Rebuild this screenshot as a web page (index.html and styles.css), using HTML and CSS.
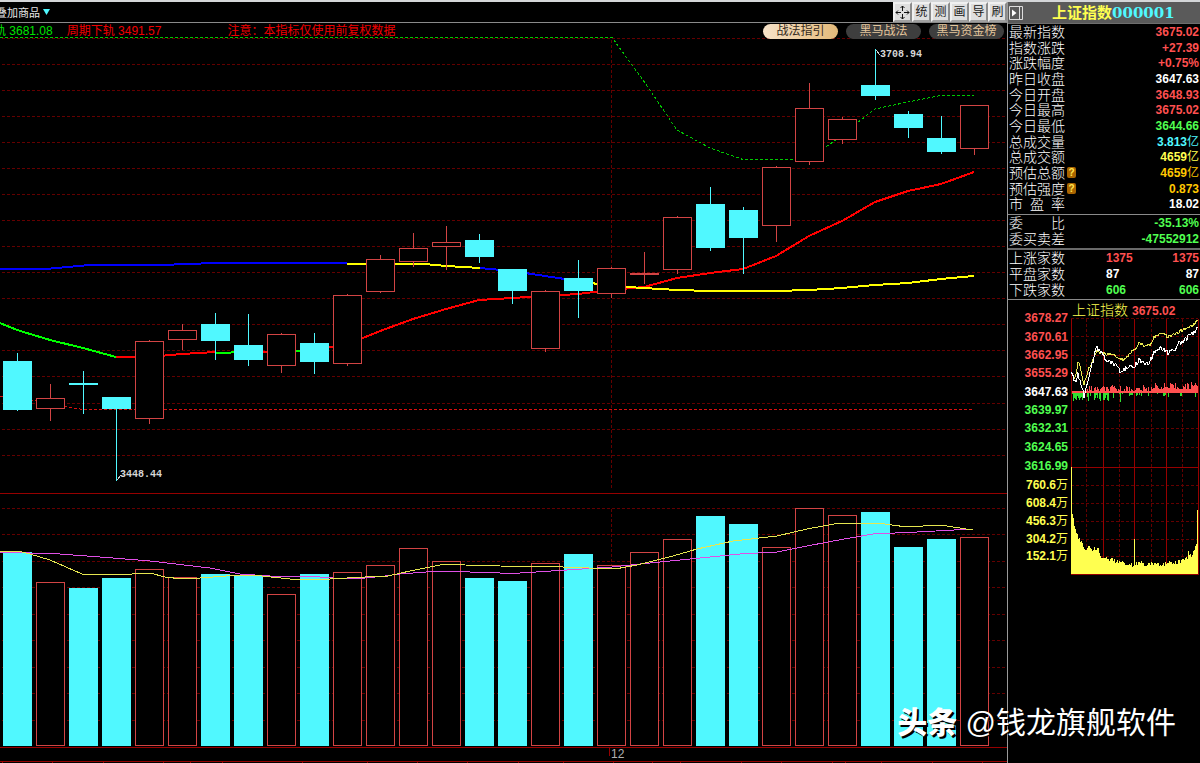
FILE: index.html
```html
<!DOCTYPE html>
<html lang="zh-CN">
<head>
<meta charset="utf-8">
<title>上证指数 000001</title>
<link rel="stylesheet" href="styles.css">
</head>
<body>
<div class="terminal">
  <main class="main">
    <header class="toolbar">
      <button class="overlay-menu" type="button">叠加商品<svg class="caret" viewBox="0 0 7 6"><path d="M0 0h7L3.500 6z"/></svg></button>
      <nav class="tools">
        <button class="tool" type="button" aria-label="移动"><svg class="move-icon" viewBox="0 0 15 15"><path d="M7.500 1v5M7.500 9v5M1 7.500h5M9 7.500h5M5.500 3l2-2 2 2M5.500 12l2 2 2-2M3 5.500l-2 2 2 2M12 5.500l2 2-2 2" /></svg></button>
        <button class="tool" type="button">统</button>
        <button class="tool" type="button">测</button>
        <button class="tool" type="button">画</button>
        <button class="tool" type="button">导</button>
        <button class="tool" type="button">刷</button>
      </nav>
    </header>
    <div class="legend">
      <span class="legend-upper">轨 3681.08</span>
      <span class="legend-lower">周期下轨 3491.57</span>
      <span class="legend-note">注意：本指标仅使用前复权数据</span>
      <div class="pills">
        <button class="pill pill-active" type="button">战法指引</button>
        <button class="pill" type="button">黑马战法</button>
        <button class="pill" type="button">黑马资金榜</button>
      </div>
    </div>
    <svg class="chart" id="chart" viewBox="0 37 1007 726" role="img" aria-label="日K线与成交量"></svg>
  </main>
  <aside class="side">
    <div class="side-title">
      <button class="expand" type="button" aria-label="展开"><svg viewBox="0 0 14 14"><path class="expand-frame" d="M.5.5h13v13H.5zM10.500 1v12"/><path class="expand-arrow" d="M3 3.500v7L7.500 7z"/></svg></button>
      <h1 class="index-name">上证指数<span class="index-code">000001</span></h1>
    </div>
    <dl class="quotes quotes-main">
      <div class="row"><dt>最新指数</dt><dd class="up">3675.02</dd></div>
      <div class="row"><dt>指数涨跌</dt><dd class="up">+27.39</dd></div>
      <div class="row"><dt>涨跌幅度</dt><dd class="up">+0.75%</dd></div>
      <div class="row"><dt>昨日收盘</dt><dd>3647.63</dd></div>
      <div class="row"><dt>今日开盘</dt><dd class="up">3648.93</dd></div>
      <div class="row"><dt>今日最高</dt><dd class="up">3675.02</dd></div>
      <div class="row"><dt>今日最低</dt><dd class="down">3644.66</dd></div>
      <div class="row"><dt>总成交量</dt><dd class="vol">3.813<i>亿</i></dd></div>
      <div class="row"><dt>总成交额</dt><dd class="amount">4659<i>亿</i></dd></div>
      <div class="row"><dt>预估总额<span class="help">?</span></dt><dd class="gold">4659<i>亿</i></dd></div>
      <div class="row"><dt>预估强度<span class="help">?</span></dt><dd class="gold">0.873</dd></div>
      <div class="row"><dt class="spread"><span>市</span><span>盈</span><span>率</span></dt><dd>18.02</dd></div>
    </dl>
    <dl class="quotes quotes-order">
      <div class="row"><dt class="spread"><span>委</span><span>比</span></dt><dd class="down">-35.13%</dd></div>
      <div class="row"><dt>委买卖差</dt><dd class="down">-47552912</dd></div>
    </dl>
    <dl class="quotes quotes-count">
      <div class="row"><dt>上涨家数</dt><dd class="mid up">1375</dd><dd class="up">1375</dd></div>
      <div class="row"><dt>平盘家数</dt><dd class="mid">87</dd><dd>87</dd></div>
      <div class="row"><dt>下跌家数</dt><dd class="mid down">606</dd><dd class="down">606</dd></div>
    </dl>
    <svg class="mini" id="mini" viewBox="1008 300 192 463" role="img" aria-label="分时走势"></svg>
  </aside>
  <p class="watermark"><b>头条</b> @钱龙旗舰软件</p>
</div>
<script src="script.js"></script>
</body>
</html>
```
FILE: styles.css
```css
* { box-sizing: border-box; }

body {
  margin: 0;
  background: #000;
  color: #fff;
  font-family: "Liberation Sans", "Noto Sans CJK SC", sans-serif;
  font-size: 12px;
}

button {
  margin: 0;
  padding: 0;
  border: 0;
  background: none;
  color: inherit;
  font: inherit;
  cursor: pointer;
}

svg { display: block; }

.terminal {
  position: relative;
  display: grid;
  grid-template-columns: minmax(0, 1fr) 193px;
  border-top: 2px solid #d4d6d8;
  overflow: hidden;
}

/* Toolbar */
.toolbar {
  display: flex;
  justify-content: space-between;
  height: 21px;
  border-bottom: 1px solid #8a8a8a;
}

.overlay-menu {
  display: flex;
  align-items: center;
  gap: 3px;
  margin-left: -4px;
  color: #e8e8e8;
  font-size: 11px;
}

.caret { width: 7px; height: 6px; fill: #50f8ff; }

.tools { display: flex; }

.tool {
  display: grid;
  place-items: center;
  width: 19px;
  height: 20px;
  border: 2px solid #f0f0f0;
  border-right-color: #8c8c8c;
  border-bottom-color: #a0a0a0;
  background: #dedede;
  color: #202020;
  font-size: 12px;
  line-height: 16px;
}

.move-icon { width: 15px; height: 15px; fill: none; stroke: #111; }

/* Indicator legend */
.legend {
  position: relative;
  z-index: 1;
  display: flex;
  height: 14px;
  line-height: 16px;
  white-space: nowrap;
}

.legend-upper { margin-left: -6px; color: #00e400; }
.legend-lower { margin-left: 14px; color: #f00000; }
.legend-note { margin-left: 66px; color: #f00000; }

.pills {
  display: flex;
  gap: 8px;
  margin: 1px 3px 0 auto;
}

.pill {
  width: 75px;
  height: 15px;
  border-radius: 8px;
  background: #3e3e3e;
  color: #e6c79c;
  font-size: 12px;
  line-height: 15px;
}

.pill-active {
  background: linear-gradient(90deg, #f6e2c8, #e4ba7a);
  color: #33291c;
}

/* K-line chart */
.chart { width: 100%; height: auto; shape-rendering: crispEdges; }

.grid { fill: none; stroke: #640000; stroke-dasharray: 3 2; }
.frame { fill: none; stroke: #960000; }
.rise { fill: #000; stroke: #d24444; }
.fall { fill: #50f8ff; stroke: #50f8ff; }
.line { fill: none; stroke-width: 2; }
.thin { fill: none; stroke-width: 1; }
.red { stroke: #f00; }
.green { stroke: #0f0; }
.blue { stroke: #00f; }
.yellow { stroke: #ff0; }
.pale { stroke: #e6e650; }
.magenta { stroke: #e050e6; }
.white { stroke: #fff; }
.band { fill: none; stroke-dasharray: 3 2; }
.band.green { stroke: #00c800; }
.band.red { stroke: #d81010; }
.pointer { stroke: #ccc; }
.mark { fill: #d8d8d8; font: bold 10px "Liberation Mono", monospace; }
.month { fill: #b0b0b0; font-size: 12px; }

/* Quote panel */
.side { border-left: 1px solid #9a9a9a; }

.side-title {
  display: flex;
  align-items: center;
  gap: 29px;
  height: 22px;
  padding-left: 1px;
  background: #5a5a5a;
  border-bottom: 1px solid #6e6e6e;
}

.expand svg { width: 14px; height: 14px; }
.expand-frame { fill: none; stroke: #ddd; }
.expand-arrow { fill: #fff; }

.index-name {
  margin: 0;
  color: #ffff50;
  font-size: 15px;
  line-height: 20px;
}

.index-code {
  color: #50f8ff;
  font-family: "DejaVu Serif", serif;
  font-size: 15px;
}

.quotes {
  display: grid;
  grid-auto-rows: 1fr;
  margin: 0;
  padding: 0 1px 1px 1px;
}

.quotes-main { height: 191px; border-bottom: 1px solid #8a8a8a; padding-bottom: 2px; }
.quotes-order { height: 35px; border-bottom: 2px solid #6a6a6a; }
.quotes-count { height: 50px; border-bottom: 1px solid #8a8a8a; }

.row {
  display: flex;
  justify-content: space-between;
  min-height: 0;
  line-height: 16px;
}

.row dt {
  display: flex;
  flex: none;
  font-size: 14px;
  font-weight: 300;
  color: #fff;
}

.row .spread { justify-content: space-between; width: 56px; }
.row dd { margin: 0; font-weight: bold; }
.row dd i { font-style: normal; font-weight: normal; }
.row .mid { flex: 1; margin-left: 41px; }

.help {
  width: 9px;
  height: 11px;
  margin: 2px 0 0 2px;
  border-radius: 2px;
  background: #a86400;
  color: #ffe650;
  font-size: 10px;
  font-weight: bold;
  line-height: 11px;
  text-align: center;
}

.up { color: #ff5050; fill: #ff5050; }
.down { color: #50ff50; fill: #50ff50; }
.vol { color: #50f8ff; }
.amount { color: #ffff50; fill: #ffff50; }
.gold { color: #ffc800; }
.flat { fill: #fff; }

/* Intraday chart */
.mini { width: 100%; height: auto; shape-rendering: crispEdges; }
.axis { font-size: 12px; font-weight: bold; text-anchor: end; }
.axis-unit { font-weight: normal; }
.mini-name { font-size: 14px; font-weight: 300; }
.mini-value { font-size: 12px; font-weight: bold; }
.bars-up { stroke: #ff5050; }
.bars-down { stroke: #30e030; }
.bars-volume { stroke: #ffff50; }

.watermark {
  position: absolute;
  right: 24px;
  bottom: 18px;
  margin: 0;
  font-size: 30px;
  line-height: 44px;
  white-space: nowrap;
  text-shadow: 1px 1px 1px #000;
}

.watermark b {
  font-weight: 900;
  text-shadow: 2px 2px 0 #000;
}
```
FILE: script.js
```javascript
const chart = document.getElementById("chart");
const mini = document.getElementById("mini");

function add(parent, tag, attrs, text) {
  const node = document.createElementNS("http://www.w3.org/2000/svg", tag);
  for (const key in attrs) node.setAttribute(key, attrs[key]);
  if (text) node.textContent = text;
  parent.appendChild(node);
  return node;
}
const path = (parent, cls, d) => add(parent, "path", { class: cls, d });
const poly = (parent, cls, points) => add(parent, "polyline", { class: cls, points });
const hline = (x1, x2, y) => `M${x1} ${y + 0.5}H${x2}`;
const vline = (x, y1, y2) => `M${x + 0.5} ${y1}V${y2}`;

// direction, high, body top, body bottom, low, volume top
const days = [
  ["f", 353, 361, 410, 411, 552], ["r", 384, 398, 409, 421, 582],
  ["f", 371, 383, 385, 414, 588], ["f", 397, 397, 409, 481, 578],
  ["r", 340, 341, 419, 424, 569], ["r", 324, 330, 340, 350, 577],
  ["f", 313, 324, 341, 360, 574], ["f", 314, 345, 360, 366, 576],
  ["r", 333, 334, 366, 373, 594], ["f", 333, 343, 362, 374, 574],
  ["r", 294, 295, 364, 366, 572], ["r", 255, 259, 292, 293, 565],
  ["r", 233, 248, 262, 267, 548], ["r", 226, 242, 247, 270, 561],
  ["f", 234, 240, 257, 263, 578], ["f", 269, 269, 291, 304, 581],
  ["r", 290, 291, 349, 352, 563], ["f", 260, 278, 291, 318, 554],
  ["r", 267, 268, 294, 298, 565], ["r", 252, 273, 275, 284, 552],
  ["r", 216, 217, 270, 274, 539], ["f", 187, 204, 248, 251, 516],
  ["f", 207, 210, 238, 274, 524], ["r", 166, 167, 226, 242, 547],
  ["r", 83, 108, 162, 165, 508], ["r", 117, 119, 140, 144, 515],
  ["f", 49, 85, 96, 100, 512], ["f", 111, 114, 128, 138, 547],
  ["f", 116, 138, 152, 154, 539], ["r", 105, 105, 149, 155, 537]
];

for (let y = 64; y < 480; y += 26) path(chart, "grid", hline(2, 1006, y > 390 ? y + 1 : y));
for (const y of [38, 508, 534, 561, 587, 614, 640, 667, 693, 720]) path(chart, "grid", hline(2, 1006, y));
path(chart, "grid", vline(611, 40, 490) + vline(611, 509, 746));
for (const y of [493, 747, 761]) path(chart, "frame", hline(0, 1007, y));
for (const x of [2, 52, 103, 163, 190, 222, 302, 367, 417, 467, 518, 563, 613, 652, 680, 741, 781, 832, 845, 881, 932, 982])
  path(chart, "frame", vline(x, 762, 763));
path(chart, "frame", vline(609, 748, 756));

// Channel bands and moving averages
poly(chart, "band green", "0,37.500 612,37.500 643,80 677,130 710,148 743,159.500 809,159.500 824,148 842,136 857,123 875,109 908,102 941,95.500 974,95.500");
poly(chart, "band red", "0,396 17,397 50,404 83,409.500 974,409.500");
poly(chart, "line blue", "0,269 45,269 90,265 160,265 215,263 347,263");
poly(chart, "line yellow", "347,264 425,264 446,266 480,268");
poly(chart, "line blue", "480,268 512,271 545,276 578,281");
poly(chart, "line red", "116,357 149,357 182,354 215,352");
poly(chart, "line green", "0,323 17,330 50,340 83,348 116,357");
poly(chart, "line green", "215,353 248,352");
poly(chart, "line red", "248,352 281,352");
poly(chart, "line green", "281,352 314,350");
poly(chart, "line red", "314,350 347,344 363,338 380,331 413,319 446,309 479,300 512,298 545,296 578,294 611,290 644,287 677,278 710,273 743,269 776,256 809,236 842,221 875,202 908,191 941,184 974,172");
poly(chart, "line yellow", "578,281 611,286 644,288 677,290 710,291 776,291 809,290 842,288 875,285 908,283 941,279 974,276");

days.forEach(([dir, high, top, bottom, low, volume], i) => {
  const x = 17 + 33 * i;
  const cls = dir === "r" ? "rise" : "fall";
  path(chart, cls, vline(x, high, low));
  add(chart, "rect", { class: cls, x: x - 13.5, y: top + 0.5, width: 28, height: bottom - top - 1 });
  add(chart, "rect", { class: cls, x: x - 13.5, y: volume + 0.5, width: 28, height: 745 - volume });
});

poly(chart, "thin magenta", "0,552 30,553 60,554 100,557 150,561 210,568 240,574 270,576 320,577 345,579 365,578 385,576 400,574 440,571 500,573 520,573 567,570 612,567 650,563 700,558 740,554 777,552 797,548 833,541 873,534 917,532 973,529");
poly(chart, "thin pale", "0,551 18,551 30,554 50,560 82,574 132,574 150,573 165,577 182,579 200,578 240,575 262,576 290,579 330,579 365,577 388,576 410,571 445,564 465,565 500,566 563,567 615,569 637,565 673,556 697,549 733,541 777,536 807,529 840,523 877,523 907,527 940,525 973,530");

path(chart, "pointer", "M876 50l4 5M117 480l4-5");
add(chart, "text", { class: "mark", x: 880, y: 57 }, "3708.94");
add(chart, "text", { class: "mark", x: 120, y: 477 }, "3448.44");
add(chart, "text", { class: "month", x: 611, y: 758 }, "12");

// Intraday panel
for (const y of [318, 336, 355, 373, 392, 410, 428, 447, 485, 503, 521, 539, 556])
  path(mini, "grid", hline(1071, 1198, y));
for (const x of [1086, 1119, 1151, 1182]) path(mini, "grid", vline(x, 319, 574));
for (const x of [1071, 1103, 1134, 1166, 1198]) path(mini, "frame", vline(x, 319, 574));
path(mini, "frame", hline(1071, 1199, 467) + hline(1071, 1199, 574));

[[3678.27, 318], [3670.61, 337], [3662.95, 355], [3655.29, 373], [3647.63, 392],
 [3639.97, 410], [3632.31, 428], [3624.65, 447], [3616.99, 466]].forEach(([value, y]) => {
  const cls = value > 3648 ? "up" : value < 3647 ? "down" : "flat";
  add(mini, "text", { class: "axis " + cls, x: 1068, y: y + 4 }, value.toFixed(2));
});
[["760.6", 485], ["608.4", 503], ["456.3", 521], ["304.2", 539], ["152.1", 556]].forEach(([value, y]) => {
  const label = add(mini, "text", { class: "axis amount", x: 1068, y: y + 4 }, value);
  add(label, "tspan", { class: "axis-unit" }, "万");
});
add(mini, "text", { class: "mini-name amount", x: 1072, y: 315 }, "上证指数");
add(mini, "text", { class: "mini-value up", x: 1132, y: 315 }, "3675.02");

// Linear interpolation over [x, y] knots
function at(knots, x) {
  for (let i = 1; i < knots.length; i++) {
    const [x0, y0] = knots[i - 1], [x1, y1] = knots[i];
    if (x <= x1) return y0 + (y1 - y0) * (x - x0) / (x1 - x0);
  }
  return knots[knots.length - 1][1];
}
const jitter = n => { const v = Math.sin(n * 12.9898) * 43758.5453; return v - Math.floor(v); };

function trace(cls, knots, spread, seed) {
  const points = [];
  for (let x = 1071; x <= 1198; x++)
    points.push(x + "," + (at(knots, x) + (jitter(x + seed) - 0.5) * spread).toFixed(1));
  poly(mini, "thin " + cls, points.join(" "));
}

let up = "", down = "", volume = "";
const volumeTop = [[1071, 508], [1073, 518], [1075, 531], [1078, 537], [1081, 542], [1085, 550], [1089, 546], [1092, 549], [1097, 548], [1101, 556], [1110, 560], [1120, 562], [1130, 565], [1140, 563], [1147, 565], [1154, 563], [1162, 564], [1172, 563], [1181, 561], [1187, 557], [1192, 555], [1196, 544], [1198, 538]];
for (let x = 1072; x < 1198; x++) {
  const base = x > 1150 ? 3 : 1;
  const rise = x < 1086 ? 1 : base + jitter(x) ** 2 * 6 + (x > 1190 ? 3 : 0);
  up += vline(x, (392 - rise).toFixed(0), 393);
  if (x < 1085 || jitter(x + 7) > (x > 1145 ? 0.9 : 0.65))
    down += vline(x, 393, (394 + jitter(x + 3) * (x < 1131 ? 7 : 3)).toFixed(0));
  volume += vline(x, (at(volumeTop, x) + (jitter(x + 11) - 0.5) * 4).toFixed(0), 574);
}
down += vline(1120, 393, 402);
volume += vline(1071, 467, 574) + vline(1134, 539, 574) + vline(1197, 510, 574) + vline(1188, 551, 574);
path(mini, "bars-up", up);
path(mini, "bars-down", down);
path(mini, "bars-volume", volume);

trace("pale", [[1071, 372], [1074, 378], [1076, 374], [1078, 362], [1080, 366], [1084, 384], [1088, 371], [1094, 356], [1097, 351], [1102, 354], [1110, 354], [1118, 357], [1121, 360], [1127, 357], [1134, 350], [1139, 344], [1145, 346], [1150, 344], [1154, 337], [1164, 333], [1168, 337], [1175, 334], [1182, 330], [1190, 327], [1195, 323], [1198, 320]], 3, 20);
trace("white", [[1071, 373], [1075, 383], [1078, 374], [1083, 392], [1084, 400], [1086, 387], [1090, 373], [1094, 356], [1096, 347], [1099, 351], [1104, 356], [1109, 363], [1116, 364], [1120, 370], [1128, 368], [1134, 367], [1139, 360], [1144, 364], [1150, 362], [1154, 352], [1163, 348], [1168, 353], [1173, 351], [1178, 344], [1184, 341], [1189, 336], [1195, 332], [1198, 328]], 5, 50);
```
